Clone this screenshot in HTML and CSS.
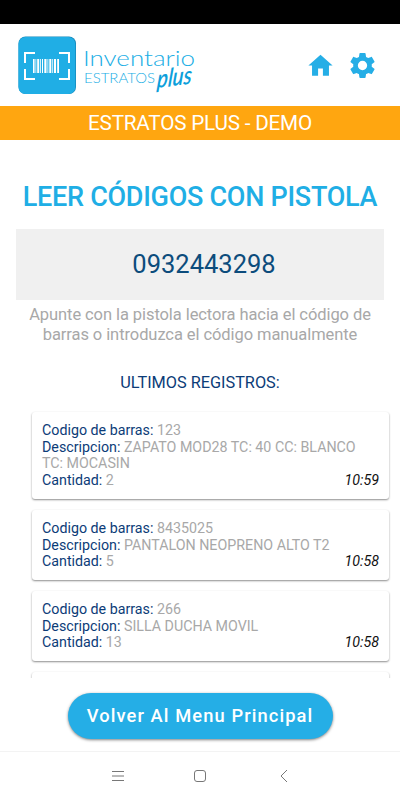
FILE: index.html
```html
<!DOCTYPE html>
<html lang="es">
<head>
    <meta charset="UTF-8">
    <meta name="viewport" content="width=device-width, initial-scale=1.0">
    <title>Inventario Estratos Plus</title>
    <link rel="stylesheet" href="styles.css">
</head>
<body>
    <div class="app">
        <div class="status-bar"></div>
        <header class="header">
            <svg class="logo" width="190" height="70" viewBox="0 0 190 70">
                <rect x="0.5" y="0.5" width="57.5" height="57.5" rx="7" fill="#1687b8"/>
                <rect x="0.5" y="1" width="56.8" height="57" rx="7" fill="#20aee5"/>
                <g fill="none" stroke="#fff" stroke-width="2">
                    <path d="M7 27v-10h10M41 17h10v10M7 33v10h10M41 43h10v-10"/>
                </g>
                <g fill="#fff">
                    <path d="M15 23h1.6v14H15zM17.5 23h.8v14h-.8zM19.2 23h2v14h-2zM22.2 23h.8v14h-.8zM24 23h1v14h-1zM26.3 23h2.2v14h-2.2zM29.5 23h.8v14h-.8zM31.3 23h2v14h-2zM34.3 23h.8v14h-.8zM36 23h2v14h-2zM39.2 23h1.8v14h-1.8z"/>
                </g>
                <text class="logo-name" x="65" y="30" textLength="112" lengthAdjust="spacingAndGlyphs">Inventario</text>
                <text class="logo-brand" x="66" y="47" textLength="71" lengthAdjust="spacingAndGlyphs">ESTRATOS</text>
                <text class="logo-plus" transform="translate(138.5 52) rotate(-7) skewX(-12)" textLength="35" lengthAdjust="spacingAndGlyphs">plus</text>
            </svg>
            <nav class="header-actions">
                <svg width="29" height="29" viewBox="0 0 24 24"><path d="M10 20.5v-6h4v6h5V12h3L12 3 2 12h3v8.5z"/></svg>
                <svg width="31" height="31" viewBox="0 0 24 24"><path d="M19.14 12.94c.04-.3.06-.61.06-.94 0-.32-.02-.64-.07-.94l2.03-1.58c.18-.14.23-.41.12-.61l-1.92-3.32c-.12-.22-.37-.29-.59-.22l-2.39.96c-.5-.38-1.03-.7-1.62-.94l-.36-2.54c-.04-.24-.24-.41-.48-.41h-3.84c-.24 0-.43.17-.47.41l-.36 2.54c-.59.24-1.13.57-1.62.94l-2.39-.96c-.22-.08-.47 0-.59.22L2.74 8.87c-.12.21-.08.47.12.61l2.03 1.58c-.05.3-.09.63-.09.94s.02.64.07.94l-2.03 1.58c-.18.14-.23.41-.12.61l1.92 3.32c.12.22.37.29.59.22l2.39-.96c.5.38 1.03.7 1.62.94l.36 2.54c.05.24.24.41.48.41h3.84c.24 0 .44-.17.47-.41l.36-2.54c.59-.24 1.13-.56 1.62-.94l2.39.96c.22.08.47 0 .59-.22l1.92-3.32c.12-.22.07-.47-.12-.61l-2.01-1.58zM12 15.6a3.6 3.6 0 1 1 0-7.2 3.6 3.6 0 0 1 0 7.2z"/></svg>
            </nav>
        </header>
        <div class="banner">ESTRATOS PLUS - DEMO</div>
        <main class="content">
            <h1>LEER CÓDIGOS CON PISTOLA</h1>
            <div class="code-input">0932443298</div>
            <p class="hint">Apunte con la pistola lectora hacia el código de<br>barras o introduzca el código manualmente</p>
            <h2>ULTIMOS REGISTROS:</h2>
            <div class="records">
                <div class="record">
                    <div><span class="label">Codigo de barras:</span> 123</div>
                    <div><span class="label">Descripcion:</span> ZAPATO MOD28 TC: 40 CC: BLANCO<br>TC: MOCASIN</div>
                    <div class="last-row"><span><span class="label">Cantidad:</span> 2</span><span class="time">10:59</span></div>
                </div>
                <div class="record">
                    <div><span class="label">Codigo de barras:</span> 8435025</div>
                    <div><span class="label">Descripcion:</span> PANTALON NEOPRENO ALTO T2</div>
                    <div class="last-row"><span><span class="label">Cantidad:</span> 5</span><span class="time">10:58</span></div>
                </div>
                <div class="record">
                    <div><span class="label">Codigo de barras:</span> 266</div>
                    <div><span class="label">Descripcion:</span> SILLA DUCHA MOVIL</div>
                    <div class="last-row"><span><span class="label">Cantidad:</span> 13</span><span class="time">10:58</span></div>
                </div>
                <div class="record"></div>
            </div>
        </main>
        <footer class="footer">
            <button class="menu-button">Volver Al Menu Principal</button>
        </footer>
        <div class="nav-bar">
            <svg width="12" height="12" viewBox="0 0 12 12"><path d="M0 1.5h12M0 6h12M0 10.5h12"/></svg>
            <svg width="12" height="12" viewBox="0 0 12 12"><rect x="0.5" y="0.5" width="11" height="11" rx="2.5"/></svg>
            <svg width="12" height="12" viewBox="0 0 12 12"><path d="M11 0L5 6l6 6"/></svg>
        </div>
    </div>
</body>
</html>
```
FILE: styles.css
```css
* {
    box-sizing: border-box;
}
body {
    margin: 0;
    font-family: Roboto, sans-serif;
    background-color: #fff;
}
.app {
    display: flex;
    flex-direction: column;
    height: 800px;
    overflow: hidden;
}
.status-bar {
    height: 24px;
    background-color: #000;
}
.header {
    display: flex;
    justify-content: space-between;
    height: 82px;
    padding: 12px 22px 0 18px;
}
.logo text {
    font-family: Lato, sans-serif;
    fill: #20aee5;
}
.logo .logo-name {
    font-size: 22px;
    font-weight: 300;
}
.logo .logo-brand {
    font-size: 13.5px;
    font-weight: 300;
}
.logo .logo-plus {
    font-size: 25px;
    font-weight: 600;
    font-style: italic;
    fill: #0c9fdb;
}
.header-actions {
    display: flex;
    align-items: center;
    gap: 12px;
    height: 59px;
    fill: #25aee6;
}
.banner {
    height: 34px;
    background-color: #ffa610;
    color: #fff;
    font-size: 20.7px;
    line-height: 34px;
    letter-spacing: -0.2px;
    text-align: center;
}
.content {
    flex: 1;
    display: flex;
    flex-direction: column;
    min-height: 0;
}
h1 {
    margin: 39px 0 0;
    color: #20aee5;
    font-size: 27px;
    font-weight: 500;
    line-height: 36px;
    letter-spacing: -0.28px;
    text-align: center;
    white-space: nowrap;
}
.code-input {
    height: 71px;
    margin: 14px 16px 0;
    padding-left: 8px;
    background-color: #f0f0f0;
    color: #0c4c7c;
    font-size: 25.5px;
    line-height: 71px;
    text-align: center;
}
.hint {
    margin: 5px 0 0;
    color: #a8a8a8;
    font-size: 16.5px;
    line-height: 19.5px;
    letter-spacing: -0.08px;
    text-align: center;
}
h2 {
    margin: 29px 0 0;
    color: #0c3c78;
    font-size: 16.3px;
    font-weight: 400;
    line-height: 20px;
    text-align: center;
}
.records {
    flex: 1;
    display: flex;
    flex-direction: column;
    gap: 11px;
    min-height: 0;
    margin-top: 18px;
    padding: 1px 11px 0 32px;
    overflow: hidden;
}
.record {
    flex-shrink: 0;
    min-height: 70px;
    padding: 10px;
    border-radius: 3px;
    box-shadow: 0 1px 2px rgba(0, 0, 0, 0.45);
    color: #a8a8a8;
    font-size: 14.25px;
    line-height: 16.7px;
}
.label {
    color: #0c3c78;
}
.last-row {
    display: flex;
    justify-content: space-between;
}
.time {
    color: #111;
    font-style: italic;
}
.footer {
    height: 73px;
    padding-top: 15px;
    text-align: center;
}
.menu-button {
    width: 265px;
    height: 46px;
    padding: 0 0 2px;
    border: none;
    border-radius: 23px;
    background-color: #25aee6;
    box-shadow: 0 1px 3px rgba(0, 0, 0, 0.5);
    color: #fff;
    font-family: Roboto, sans-serif;
    font-size: 18.3px;
    font-weight: 500;
    letter-spacing: 1.1px;
}
.nav-bar {
    display: flex;
    justify-content: center;
    align-items: center;
    gap: 70px;
    height: 49px;
    border-top: 1px solid #f3f3f3;
    fill: none;
    stroke: #777;
}
```
